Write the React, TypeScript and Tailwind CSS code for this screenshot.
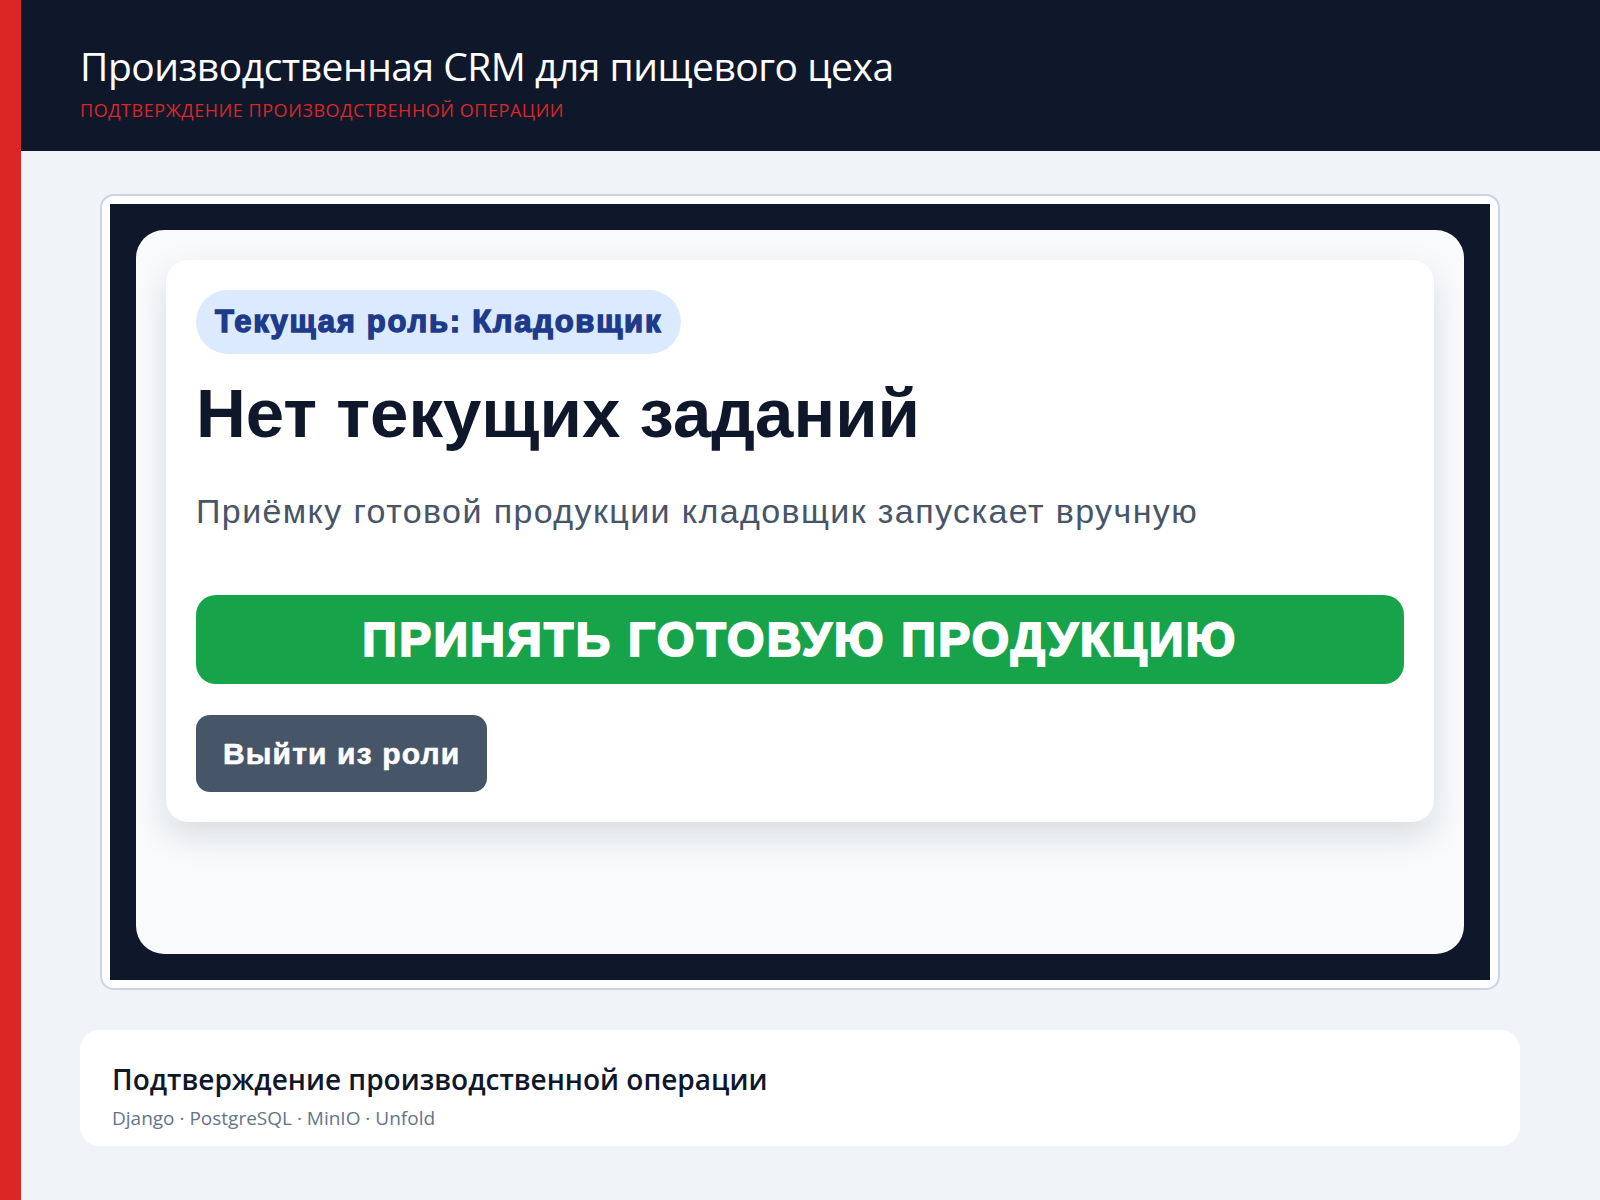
export default function App() {
  return (
    <div className="relative min-h-[1200px] bg-[#f0f4f9] font-['Open_Sans',sans-serif]">
      <div className="absolute bottom-0 left-0 top-0 w-[21px] bg-[#dc2626]" />

      <header className="h-[151px] bg-[#0f172a]">
        <div className="mx-auto max-w-[1440px] pt-[42px]">
          <h1 className="text-[39px] font-medium leading-[48px] tracking-[-0.5px] text-white">
            Производственная CRM для пищевого цеха
          </h1>
          <p className="mt-2 text-[18px] font-medium leading-[24px] tracking-[0.55px] uppercase text-[#dc2626]">
            Подтверждение производственной операции
          </p>
        </div>
      </header>

      <main className="mx-auto max-w-[1440px] pt-[43px]">
        <div className="mx-[20px] rounded-[14px] border-2 border-[#cbd5e1] bg-white p-[8px]">
          <div className="bg-[#0f172a] p-[26px]">
            <div className="h-[724px] rounded-[28px] bg-[#f8fafc] p-[30px] font-['Liberation_Sans',Arial,sans-serif]">
              <div className="rounded-[22px] bg-white p-[30px] shadow-[0_14px_34px_rgba(15,23,42,0.13)]">
                <span className="inline-block rounded-full bg-[#dbeafe] px-[19px] py-[14px] text-[31px] font-bold leading-[36px] tracking-[1.75px] text-[#1e3a8a] [-webkit-text-stroke:1.4px_#1e3a8a]">
                  Текущая роль: Кладовщик
                </span>
                <h2 className="mt-[21px] text-[69px] font-bold leading-[77px] text-[#0f172a]">
                  Нет текущих заданий
                </h2>
                <p className="mt-[36px] text-[34px] leading-[46px] tracking-[1.4px] text-[#475569]">
                  Приёмку готовой продукции кладовщик запускает вручную
                </p>
                <button className="mt-[61px] flex h-[89px] w-full items-center justify-center rounded-[20px] bg-[#16a34a] text-[48px] font-bold tracking-[2.3px] text-white [-webkit-text-stroke:2px_#fff]">
                  ПРИНЯТЬ ГОТОВУЮ ПРОДУКЦИЮ
                </button>
                <button className="mt-[31px] flex h-[77px] items-center rounded-[14px] bg-[#475569] px-[27px] text-[30px] font-bold tracking-[1.15px] text-white [-webkit-text-stroke:0.6px_#fff]">
                  Выйти из роли
                </button>
              </div>
            </div>
          </div>
        </div>

        <div className="mt-[40px] rounded-[20px] bg-white px-[32px] pb-[15px] pt-[31px]">
          <h3 className="text-[28px] font-semibold leading-[36px] text-[#0f172a]">
            Подтверждение производственной операции
          </h3>
          <p className="mt-[8px] text-[19px] leading-[26px] text-[#64748b]">
            Django · PostgreSQL · MinIO · Unfold
          </p>
        </div>
      </main>
    </div>
  );
}
